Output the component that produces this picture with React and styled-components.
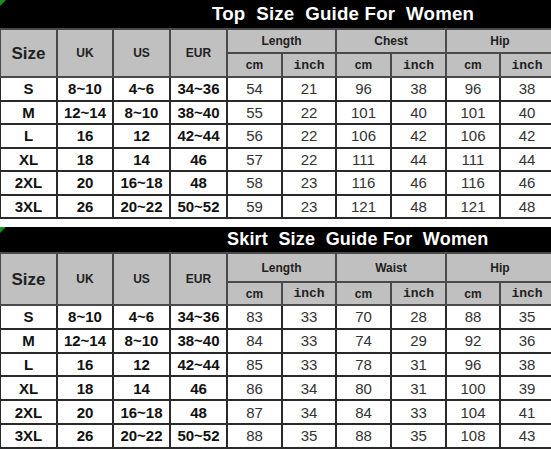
import React from 'react';
import styled, { createGlobalStyle } from 'styled-components';

const GlobalStyle = createGlobalStyle`
  html, body {
    margin: 0;
    padding: 0;
    background: #fff;
    overflow: hidden;
  }
  body {
    font-family: "Liberation Sans", Arial, sans-serif;
  }
`;

const COLS = [57, 56, 57, 57, 55, 54, 55, 55, 54, 54];

const topRows = [
  ['S', '8~10', '4~6', '34~36', 54, 21, 96, 38, 96, 38],
  ['M', '12~14', '8~10', '38~40', 55, 22, 101, 40, 101, 40],
  ['L', '16', '12', '42~44', 56, 22, 106, 42, 106, 42],
  ['XL', '18', '14', '46', 57, 22, 111, 44, 111, 44],
  ['2XL', '20', '16~18', '48', 58, 23, 116, 46, 116, 46],
  ['3XL', '26', '20~22', '50~52', 59, 23, 121, 48, 121, 48],
];

const skirtRows = [
  ['S', '8~10', '4~6', '34~36', 83, 33, 70, 28, 88, 35],
  ['M', '12~14', '8~10', '38~40', 84, 33, 74, 29, 92, 36],
  ['L', '16', '12', '42~44', 85, 33, 78, 31, 96, 38],
  ['XL', '18', '14', '46', 86, 34, 80, 31, 100, 39],
  ['2XL', '20', '16~18', '48', 87, 34, 84, 33, 104, 41],
  ['3XL', '26', '20~22', '50~52', 88, 35, 88, 35, 108, 43],
];

const Page = styled.div`
  width: 551px;
  height: 449px;
  overflow: hidden;
  display: flex;
  flex-direction: column;
  gap: ${(p) => p.$gap}px;
`;

const Section = styled.section`
  display: flex;
  flex-direction: column;
  width: 554px;
`;

const TitleBar = styled.div`
  position: relative;
  height: ${(p) => p.$height}px;
  flex-shrink: 0;
  background: #000;
  color: #fff;
  font-weight: bold;
  font-size: ${(p) => p.$size}px;
  white-space: pre;
  display: flex;
  align-items: center;
  padding-left: ${(p) => p.$indent}px;
  letter-spacing: 0.2px;

  &::before {
    content: '';
    position: absolute;
    left: 0;
    top: 0;
    border-top: 6px solid #1e8c1e;
    border-right: 6px solid transparent;
  }
`;

const Table = styled.table`
  border-collapse: collapse;
  table-layout: fixed;
  width: 554px;
  margin-left: -1px;
  line-height: 1;
`;

const HeadCell = styled.th`
  background: #c0c0c0;
  border: 2px solid #4a4a4a;
  color: #222;
  font-weight: bold;
  font-size: ${(p) => p.$size || 12}px;
  font-family: ${(p) =>
    p.$mono ? '"Liberation Mono", "Courier New", monospace' : '"Liberation Sans", Arial, sans-serif'};
  text-align: center;
  padding: 0;
  height: ${(p) => p.$height}px;
`;

const Cell = styled.td`
  border: 2px solid #2a2a2a;
  border-top-color: #111;
  text-align: center;
  padding: 0;
  height: ${(p) => p.$height}px;
  font-size: 15px;
  font-weight: ${(p) => (p.$bold ? 'bold' : 'normal')};
  color: ${(p) => (p.$bold ? '#111' : '#333')};
`;

const SizeTable = ({ title, titleHeight, titleSize, indent, middle, headTop, headBottom, rowHeight, rows }) => (
  <Section>
    <TitleBar $height={titleHeight} $size={titleSize} $indent={indent}>
      {title}
    </TitleBar>
    <Table>
      <colgroup>
        {COLS.map((w, i) => (
          <col key={i} style={{ width: w }} />
        ))}
      </colgroup>
      <thead>
        <tr>
          <HeadCell rowSpan={2} $size={17}>Size</HeadCell>
          <HeadCell rowSpan={2}>UK</HeadCell>
          <HeadCell rowSpan={2}>US</HeadCell>
          <HeadCell rowSpan={2}>EUR</HeadCell>
          <HeadCell colSpan={2} $height={headTop}>Length</HeadCell>
          <HeadCell colSpan={2}>{middle}</HeadCell>
          <HeadCell colSpan={2}>Hip</HeadCell>
        </tr>
        <tr>
          {[0, 1, 2].map((i) => (
            <React.Fragment key={i}>
              <HeadCell $height={headBottom}>cm</HeadCell>
              <HeadCell $mono $size={13}>inch</HeadCell>
            </React.Fragment>
          ))}
        </tr>
      </thead>
      <tbody>
        {rows.map((r) => (
          <tr key={r[0]}>
            {r.map((v, i) => (
              <Cell key={i} $bold={i < 4} $height={rowHeight}>
                {v}
              </Cell>
            ))}
          </tr>
        ))}
      </tbody>
    </Table>
  </Section>
);

export default function App() {
  return (
    <>
      <GlobalStyle />
      <Page $gap={8}>
        <SizeTable
          title="Top  Size  Guide For  Women"
          titleHeight={28}
          titleSize={18.7}
          indent={212}
          middle="Chest"
          headTop={22}
          headBottom={22}
          rowHeight={21.5}
          rows={topRows}
        />
        <SizeTable
          title="Skirt  Size  Guide For  Women"
          titleHeight={25}
          titleSize={18}
          indent={227}
          middle="Waist"
          headTop={27}
          headBottom={21}
          rowHeight={21.8}
          rows={skirtRows}
        />
      </Page>
    </>
  );
}
